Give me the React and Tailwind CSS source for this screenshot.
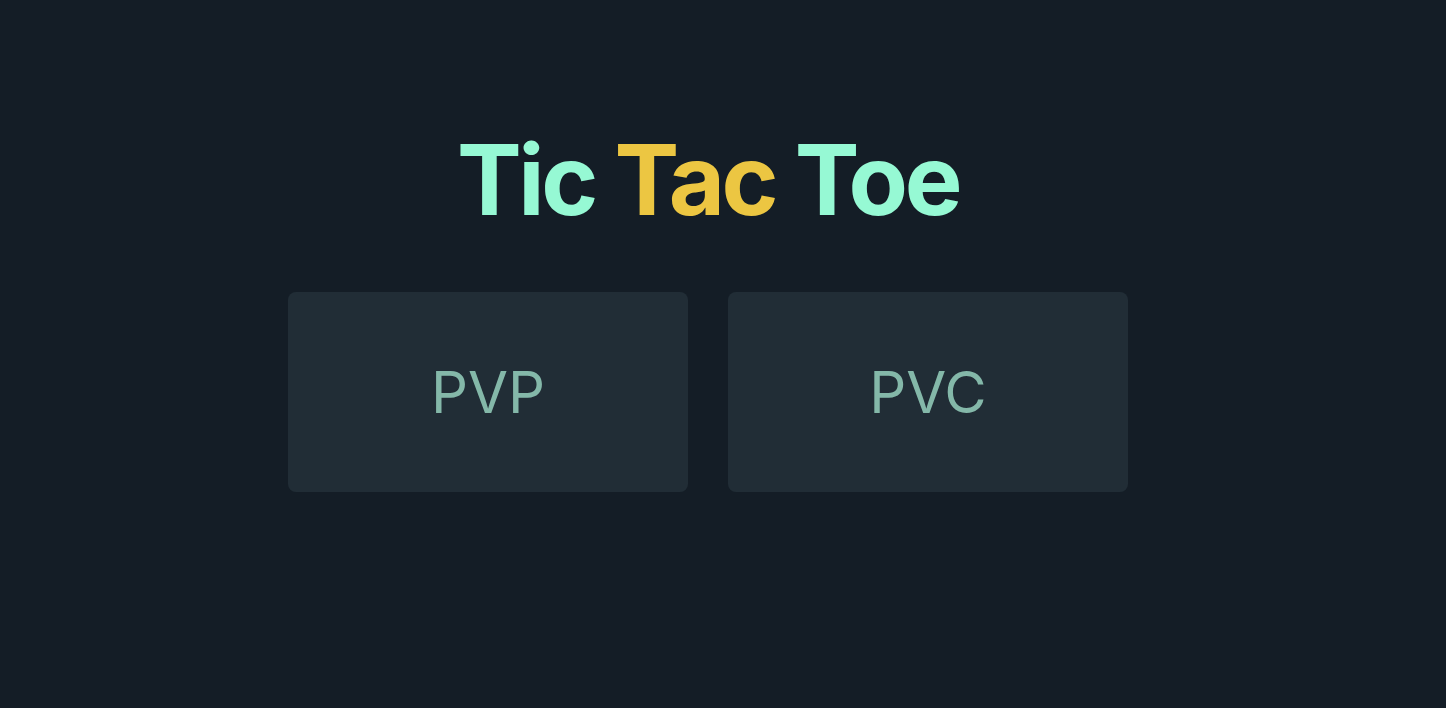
export default function App() {
  return (
    <div
      className="w-full min-h-[708px] bg-[#141d26] flex flex-col items-center pt-[131px] pr-[30px]"
      style={{ fontFamily: "Inter, 'Noto Sans', sans-serif" }}
    >
      <h1 className="text-[97px] leading-none font-bold tracking-[-3.4px]">
        <span className="text-[#96f9d4]">Tic </span>
        <span className="text-[#ecc642]">Tac </span>
        <span className="text-[#96f9d4]">Toe</span>
      </h1>
      <div className="flex gap-10 mt-[64px]">
        <button className="w-[400px] h-[200px] rounded-lg bg-[#212d36] text-[#84b8a9] text-[58px] font-normal flex items-center justify-center">
          PVP
        </button>
        <button className="w-[400px] h-[200px] rounded-lg bg-[#212d36] text-[#84b8a9] text-[58px] font-normal flex items-center justify-center">
          PVC
        </button>
      </div>
    </div>
  );
}
